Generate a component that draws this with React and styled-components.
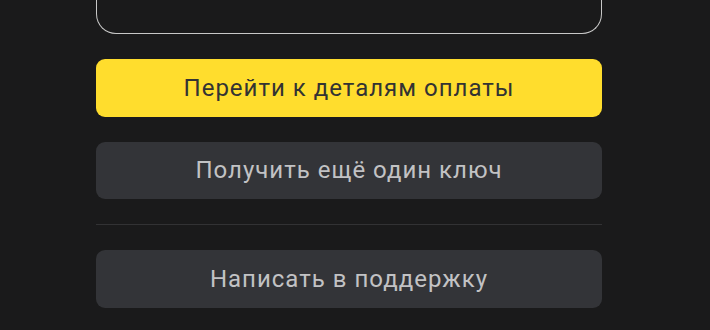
import React from 'react';
import styled, { createGlobalStyle } from 'styled-components';

const GlobalStyle = createGlobalStyle`
  html, body {
    margin: 0;
    padding: 0;
    background: #1a1a1b;
  }
  body {
    font-family: Roboto, "Noto Sans", Arial, sans-serif;
  }
`;

const Page = styled.div`
  width: 506px;
  margin-left: 96px;
  display: flex;
  flex-direction: column;
  gap: 25px;
`;

const Card = styled.div`
  height: 34px;
  box-sizing: border-box;
  border: 1px solid #c8c8c8;
  border-top: none;
  border-radius: 0 0 20px 20px;
`;

const Button = styled.button`
  height: 57.5px;
  width: 100%;
  border: none;
  border-radius: 9px;
  font-family: inherit;
  font-size: 24px;
  letter-spacing: 1px;
  cursor: pointer;
  background: ${({ $primary }) => ($primary ? '#ffdd2d' : '#333438')};
  color: ${({ $primary }) => ($primary ? '#333333' : '#c2c2c4')};
`;

const Divider = styled.hr`
  margin: 0;
  border: none;
  height: 1px;
  background: #323234;
`;

export default function App() {
  return (
    <>
      <GlobalStyle />
      <Page>
        <Card />
        <Button $primary>Перейти к деталям оплаты</Button>
        <Button>Получить ещё один ключ</Button>
        <Divider />
        <Button>Написать в поддержку</Button>
      </Page>
    </>
  );
}
